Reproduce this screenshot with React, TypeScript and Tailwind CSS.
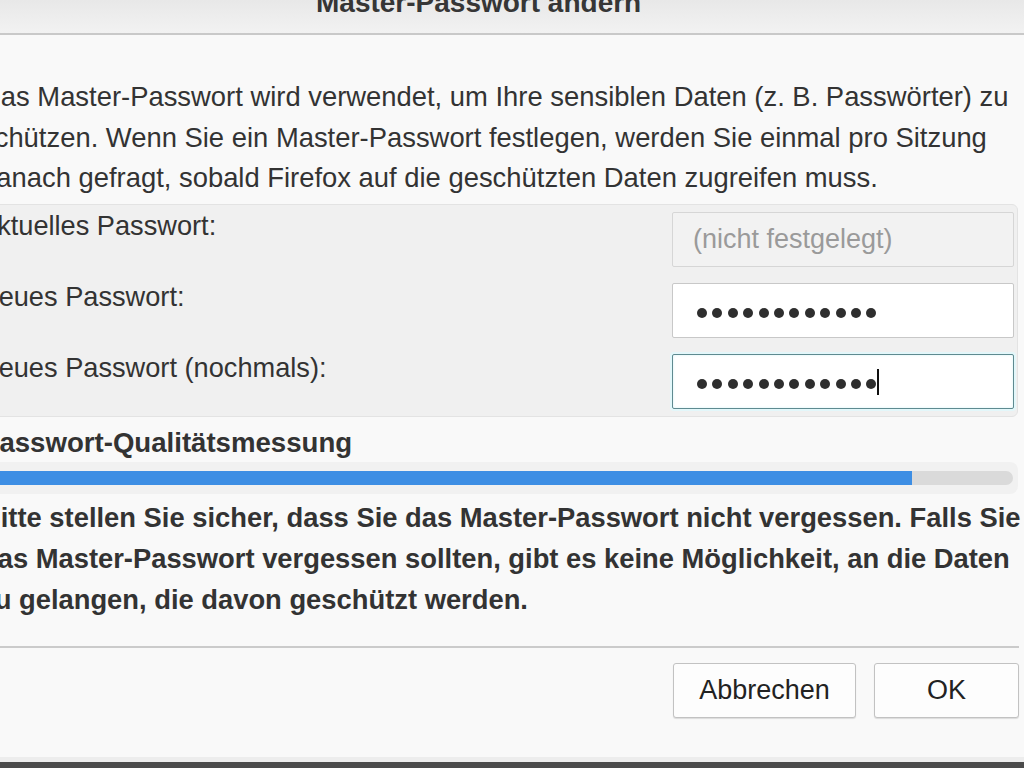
import React from "react";

const Dots = ({ n }: { n: number }) => (
  <div className="flex items-center gap-[5.4px]">
    {Array.from({ length: n }).map((_, i) => (
      <span key={i} className="block w-[10px] h-[10px] rounded-full bg-[#2e2e2e]" />
    ))}
  </div>
);

export default function App() {
  return (
    <div
      className="w-[1024px] h-[768px] overflow-hidden bg-[#f9f9f9] flex flex-col text-[#333]"
      style={{ fontFamily: '"Liberation Sans", Arial, sans-serif' }}
    >
      {/* title bar */}
      <div className="h-[33px] shrink-0 overflow-hidden bg-[#ececec] bg-gradient-to-b from-[#e8e8e8] to-[#f2f2f2]">
        <div className="pl-[316px] -mt-[11px] text-[28px] leading-[28px] font-bold text-[#363636] whitespace-nowrap">
          Master-Passwort ändern
        </div>
      </div>
      <div className="h-[2px] shrink-0 bg-[#c9c9c9]" />

      {/* body */}
      <div className="flex-1 flex flex-col -ml-[19px] pr-[6px]">
        <div className="pt-[42px] text-[27.4px] leading-[40.5px] whitespace-nowrap">
          <div>Das Master-Passwort wird verwendet, um Ihre sensiblen Daten (z. B. Passwörter) zu</div>
          <div>schützen. Wenn Sie ein Master-Passwort festlegen, werden Sie einmal pro Sitzung</div>
          <div>danach gefragt, sobald Firefox auf die geschützten Daten zugreifen muss.</div>
        </div>

        {/* fields group */}
        <div className="mt-[5px] bg-[#f0f0f0] border border-[#e3e3e3] rounded-r-[6px] pt-[7px] pb-[7px] pr-[3px] flex flex-col gap-[16px]">
          <div className="flex items-start justify-between">
            <div className="-ml-[3px] text-[27.2px] leading-[27px] whitespace-nowrap">Aktuelles Passwort:</div>
            <div className="w-[342px] h-[55px] bg-[#f2f2f2] border border-[#d6d6d6] rounded-[2px] flex items-center pl-[20px] text-[27px] text-[#9a9a9a] whitespace-nowrap">
              (nicht festgelegt)
            </div>
          </div>
          <div className="flex items-start justify-between">
            <div className="-ml-[3px] text-[27.2px] leading-[27px] whitespace-nowrap">Neues Passwort:</div>
            <div className="w-[342px] h-[55px] bg-white border border-[#c8c8c8] rounded-[2px] flex items-center pl-[24px] pt-[5px]">
              <Dots n={12} />
            </div>
          </div>
          <div className="flex items-start justify-between">
            <div className="-ml-[3px] text-[27.2px] leading-[27px] whitespace-nowrap">Neues Passwort (nochmals):</div>
            <div className="w-[342px] h-[55px] bg-white border border-[#5e8a90] rounded-[2px] shadow-[0_0_0_2px_#e3f7fa,inset_0_0_3px_#d8f3f7] flex items-center pl-[24px] pt-[5px]">
              <Dots n={12} />
              <span className="block w-[2px] h-[26px] bg-[#111] ml-[1px] -mt-[3px]" />
            </div>
          </div>
        </div>

        {/* quality */}
        <div className="mt-[12px] text-[27.6px] leading-[27px] font-bold text-[#333] whitespace-nowrap">
          Passwort-Qualitätsmessung
        </div>
        <div className="mt-[6px] bg-[#f1f1f1] rounded-r-[8px] py-[9px] pr-[5px]">
          <div className="h-[14px] bg-[#dadada] rounded-r-full overflow-hidden">
            <div className="h-full w-[931px] bg-[#3d8ee4]" />
          </div>
        </div>

        <div className="mt-[3px] text-[27.35px] leading-[41px] font-bold text-[#333] whitespace-nowrap">
          <div>Bitte stellen Sie sicher, dass Sie das Master-Passwort nicht vergessen. Falls Sie</div>
          <div>das Master-Passwort vergessen sollten, gibt es keine Möglichkeit, an die Daten</div>
          <div>zu gelangen, die davon geschützt werden.</div>
        </div>

        <div className="mt-[26px] h-[2px] bg-[#cbcbcb] mr-[-1px]" />

        <div className="mt-[15px] flex justify-end gap-[18px] mr-[-1px]">
          <button className="w-[183px] h-[55px] bg-[#fdfdfd] border border-[#c2c2c2] rounded-[3px] shadow-[0_1px_1px_rgba(0,0,0,0.12)] text-[27px] text-[#222]">
            Abbrechen
          </button>
          <button className="w-[145px] h-[55px] bg-[#fdfdfd] border border-[#c2c2c2] rounded-[3px] shadow-[0_1px_1px_rgba(0,0,0,0.12)] text-[27px] text-[#222]">
            OK
          </button>
        </div>
      </div>

      <div className="h-[5px] shrink-0 bg-[#ededed]" />
      <div className="h-[6px] shrink-0 bg-[#4b4b4b]" />
    </div>
  );
}
